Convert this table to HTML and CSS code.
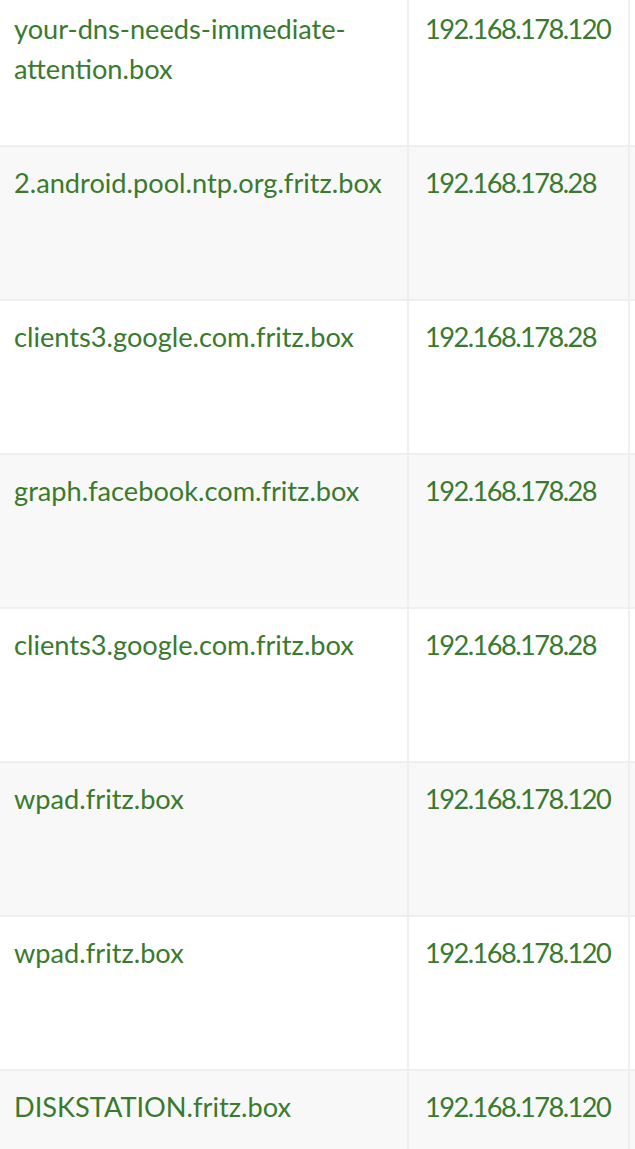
FILE: index.html
```html
<!DOCTYPE html>
<html>
<head>
<meta charset="utf-8">
<title>DNS-Anfragen</title>
<link rel="stylesheet" href="styles.css">
</head>
<body>
<div class="viewport">
  <table class="dns-table">
    <colgroup>
      <col class="col-host">
      <col class="col-ip">
      <col class="col-more">
    </colgroup>
    <tbody>
      <tr><td class="host">your-dns-needs-immediate-attention.box</td><td class="ip">192.168.178.120</td><td class="more"></td></tr>
      <tr><td class="host">2.android.pool.ntp.org.fritz.box</td><td class="ip">192.168.178.28</td><td class="more"></td></tr>
      <tr><td class="host">clients3.google.com.fritz.box</td><td class="ip">192.168.178.28</td><td class="more"></td></tr>
      <tr><td class="host">graph.facebook.com.fritz.box</td><td class="ip">192.168.178.28</td><td class="more"></td></tr>
      <tr><td class="host">clients3.google.com.fritz.box</td><td class="ip">192.168.178.28</td><td class="more"></td></tr>
      <tr><td class="host">wpad.fritz.box</td><td class="ip">192.168.178.120</td><td class="more"></td></tr>
      <tr><td class="host">wpad.fritz.box</td><td class="ip">192.168.178.120</td><td class="more"></td></tr>
      <tr><td class="host">DISKSTATION.fritz.box</td><td class="ip">192.168.178.120</td><td class="more"></td></tr>
    </tbody>
  </table>
</div>
</body>
</html>
```
FILE: styles.css
```css
html, body {
  margin: 0;
  padding: 0;
  background: #ffffff;
}

.viewport {
  height: 100vh;
  overflow: hidden;
}

.dns-table {
  table-layout: fixed;
  width: 842px;
  border-collapse: separate;
  border-spacing: 0;
  margin: -9px 0 0 -4px;
  font-family: Lato, "Noto Sans", sans-serif;
  font-size: 27.2px;
  line-height: 40px;
  color: #3a7a2e;
}

.col-host { width: 411px; }
.col-ip { width: 221px; }
.col-more { width: 210px; }

.dns-table td {
  height: 120px;
  padding: 16px;
  border-top: 2px solid #efefef;
  border-left: 2px solid #efefef;
  vertical-align: top;
}

.dns-table tr:nth-child(even) td {
  background: #f8f8f8;
}

.dns-table .ip {
  white-space: nowrap;
  letter-spacing: -1.55px;
}
```
